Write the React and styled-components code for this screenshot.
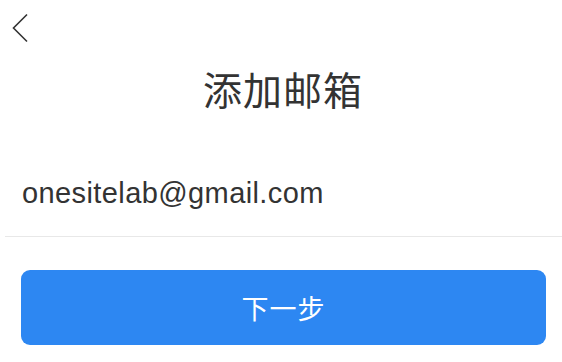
import React from "react"
import styled, { createGlobalStyle } from "styled-components"

const GlobalStyle = createGlobalStyle`
  html, body {
    margin: 0;
    padding: 0;
    background: #ffffff;
  }
  body {
    font-family: "Noto Sans", "Noto Sans CJK SC", sans-serif;
  }
`

const Page = styled.div`
  width: 562px;
  height: 362px;
  overflow: hidden;
  display: flex;
  flex-direction: column;
`

const TopBar = styled.div`
  height: 56px;
  display: flex;
  align-items: flex-start;
  padding: 13px 0 0 12px;
  box-sizing: border-box;
`

const BackButton = styled.button`
  border: 0;
  background: none;
  padding: 0;
  width: 18px;
  height: 30px;
  cursor: pointer;
  svg {
    display: block;
  }
`

const Title = styled.h1`
  margin: 7px 0 0;
  padding-left: 4px;
  text-align: center;
  font-family: "Noto Sans CJK SC", sans-serif;
  font-weight: 400;
  font-size: 39px;
  line-height: 50px;
  color: #333333;
  letter-spacing: 1px;
`

const Field = styled.div`
  margin: 60px 0 0 5px;
  border-bottom: 1.5px solid #e8e8e8;
  padding: 0 0 23px 17px;
`

const EmailInput = styled.input`
  border: 0;
  outline: none;
  padding: 0;
  width: 100%;
  font-family: "Liberation Sans", Arial, sans-serif;
  font-size: 29px;
  letter-spacing: 0.4px;
  line-height: 40px;
  height: 40px;
  color: #333333;
  background: transparent;
`

const NextButton = styled.button`
  margin: 33px 16px 0 21px;
  height: 75px;
  border: 0;
  border-radius: 9px;
  background: #2d87f2;
  color: #ffffff;
  font-family: "Noto Sans CJK SC", sans-serif;
  font-size: 27px;
  letter-spacing: 1px;
  cursor: pointer;
`

const App = () => {
  return (
    <Page>
      <GlobalStyle />
      <TopBar>
        <BackButton aria-label="返回">
          <svg width="18" height="30" viewBox="0 0 18 30">
            <path d="M15 1.5 L1.5 15 L15 28.5" fill="none" stroke="#333" strokeWidth="1.6" />
          </svg>
        </BackButton>
      </TopBar>
      <Title>添加邮箱</Title>
      <Field>
        <EmailInput defaultValue="onesitelab@gmail.com" />
      </Field>
      <NextButton>下一步</NextButton>
    </Page>
  )
}

export default App
